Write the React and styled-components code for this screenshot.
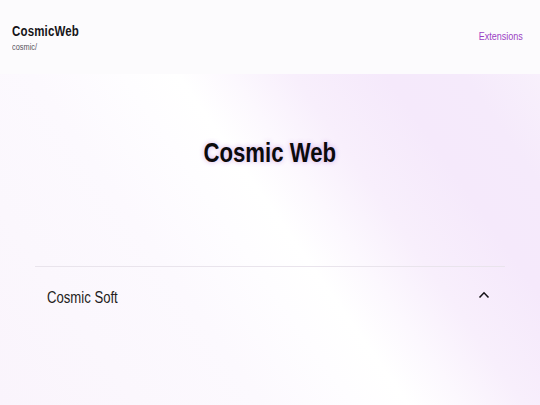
import React from "react";
import styled, { createGlobalStyle } from "styled-components";

const Global = createGlobalStyle`
  html, body {
    margin: 0;
    padding: 0;
  }
  body {
    font-family: "Liberation Sans", Arial, sans-serif;
    color: #1c1a1e;
  }
`;

/* the reference uses a narrow grotesque, so squeeze Arial-metric text */
const Narrow = styled.span`
  display: inline-block;
  white-space: nowrap;
  transform: scaleX(0.82);
  transform-origin: ${(p) => p.$origin || "left"} center;
`;

/* wrapper */
const Page = styled.div`
  min-height: 100vh;
  display: flex;
  flex-direction: column;
  background: #fcfbfd;
`;

/* top bar */
const Header = styled.header`
  height: 74px;
  display: flex;
  align-items: center;
  justify-content: space-between;
  padding: 0 17px 0 12px;
  background: #fcfbfd;
`;

const Brand = styled.div`
  display: flex;
  flex-direction: column;
  align-items: flex-start;
  gap: 3px;
  margin-top: 2px;

  .name {
    font-size: 14px;
    font-weight: 700;
    letter-spacing: 0.2px;
    color: #161418;
    line-height: 16px;
  }
  .path {
    font-size: 9px;
    color: #57535a;
    line-height: 11px;
  }
`;

const NavLink = styled.a`
  font-size: 11px;
  color: #9b3fc4;
  text-decoration: none;
  margin-top: -2px;
`;

/* hero + list */
const Main = styled.main`
  flex: 1;
  display: flex;
  flex-direction: column;
  padding: 62px 35px 0;
  background: linear-gradient(
    55deg,
    #faf4fc 0%,
    #fbf7fd 18%,
    #fcf9fe 34%,
    #fefdff 46%,
    #ffffff 53%,
    #fcf8fe 60%,
    #f8effc 68%,
    #f5e9fb 80%,
    #f5eafb 90%,
    #f8f0fc 100%
  );
`;

const Title = styled.h1`
  margin: 0 0 96px;
  text-align: center;
  font-size: 27px;
  line-height: 34px;
  font-weight: 700;
  color: #0b0a0c;
  text-shadow: 0 0 6px rgba(160, 80, 210, 0.45);
`;

const Accordion = styled.section`
  border-top: 1px solid #e9e4ec;
`;

const Row = styled.button`
  width: 100%;
  height: 62px;
  display: flex;
  align-items: center;
  justify-content: space-between;
  padding: 0 15px 0 12px;
  border: none;
  background: transparent;
  font-family: inherit;
  font-size: 16px;
  color: #1f1d21;
  cursor: pointer;

  svg {
    width: 12px;
    height: 12px;
    margin-top: -6px;
  }
`;

export default function App() {
  return (
    <>
      <Global />
      <Page>
        <Header>
          <Brand>
            <Narrow className="name">CosmicWeb</Narrow>
            <Narrow className="path">cosmic/</Narrow>
          </Brand>
          <NavLink href="#">
            <Narrow $origin="right">Extensions</Narrow>
          </NavLink>
        </Header>
        <Main>
          <Title>
            <Narrow $origin="center">Cosmic Web</Narrow>
          </Title>
          <Accordion>
            <Row>
              <Narrow>Cosmic Soft</Narrow>
              <svg viewBox="0 0 12 12" fill="none" stroke="#141216" strokeWidth="1.6">
                <path d="M1.5 8.5 L6 3.8 L10.5 8.5" />
              </svg>
            </Row>
          </Accordion>
        </Main>
      </Page>
    </>
  );
}
